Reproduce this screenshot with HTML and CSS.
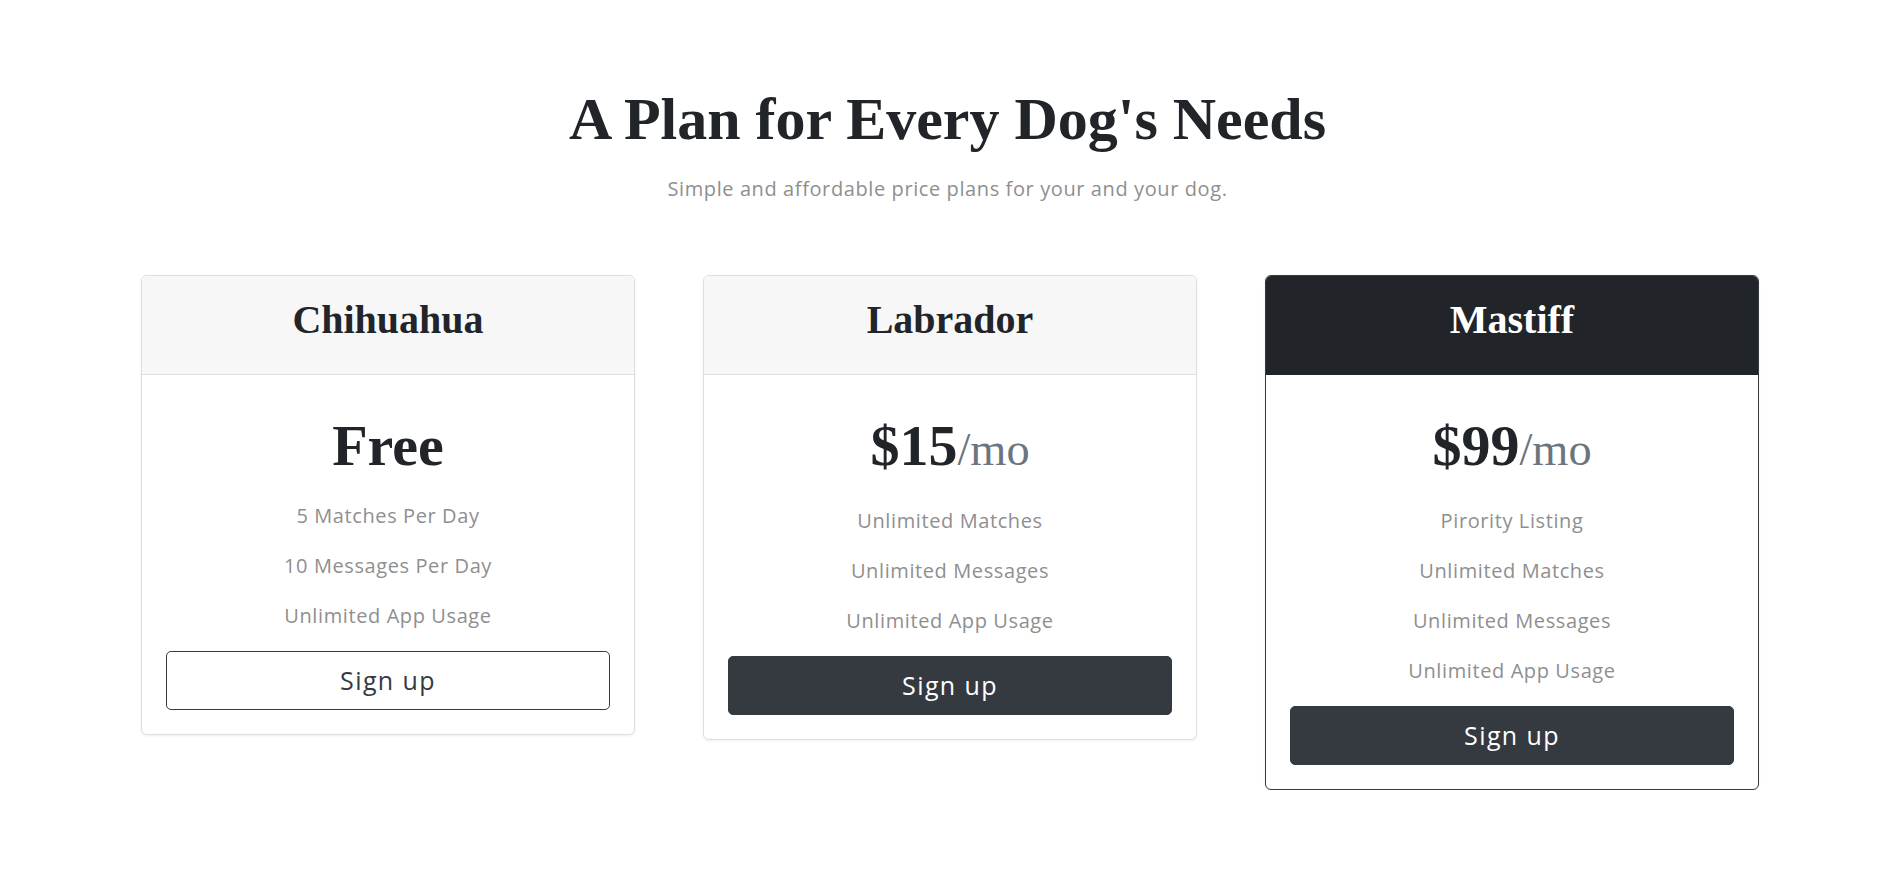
FILE: index.html
```html
<!DOCTYPE html>
<html lang="en">
<head>
<meta charset="utf-8">
<title>Pricing</title>
<link rel="stylesheet" href="styles.css">
</head>
<body>
<section class="pricing">
  <h1 class="section-title">A Plan for Every Dog's Needs</h1>
  <p class="section-sub">Simple and affordable price plans for your and your dog.</p>
  <div class="plans">
    <div class="card">
      <div class="card-header"><h3 class="plan-name">Chihuahua</h3></div>
      <div class="card-body">
        <h2 class="price">Free</h2>
        <ul class="features">
          <li>5 Matches Per Day</li>
          <li>10 Messages Per Day</li>
          <li>Unlimited App Usage</li>
        </ul>
        <button class="btn btn-outline">Sign up</button>
      </div>
    </div>
    <div class="card">
      <div class="card-header"><h3 class="plan-name">Labrador</h3></div>
      <div class="card-body">
        <h2 class="price">$15<small class="per">/mo</small></h2>
        <ul class="features">
          <li>Unlimited Matches</li>
          <li>Unlimited Messages</li>
          <li>Unlimited App Usage</li>
        </ul>
        <button class="btn btn-dark">Sign up</button>
      </div>
    </div>
    <div class="card card-featured">
      <div class="card-header"><h3 class="plan-name">Mastiff</h3></div>
      <div class="card-body">
        <h2 class="price">$99<small class="per">/mo</small></h2>
        <ul class="features">
          <li>Pirority Listing</li>
          <li>Unlimited Matches</li>
          <li>Unlimited Messages</li>
          <li>Unlimited App Usage</li>
        </ul>
        <button class="btn btn-dark">Sign up</button>
      </div>
    </div>
  </div>
</section>
</body>
</html>
```

FILE: styles.css
```css
* { box-sizing: border-box; }

html, body {
  margin: 0;
  padding: 0;
  background: #ffffff;
}

body {
  font-family: "Open Sans", "Liberation Sans", sans-serif;
  color: #212529;
}

.pricing {
  padding-top: 84px;
  text-align: center;
}

.section-title {
  margin: 0;
  font-family: "Liberation Serif", "Times New Roman", serif;
  font-weight: 700;
  font-size: 60px;
  line-height: 70px;
  color: #212529;
}

.section-sub {
  margin: 20px 0 0;
  font-size: 20px;
  line-height: 30px;
  letter-spacing: 0.6px;
  color: #8f8f8f;
}

.plans {
  display: flex;
  gap: 68px;
  padding-left: 141px;
  margin-top: 71px;
  align-items: flex-start;
}

.card {
  width: 494px;
  border: 1px solid #dfdfdf;
  border-radius: 6px;
  background: #fff;
  box-shadow: 0 1px 3px rgba(0, 0, 0, 0.07);
  overflow: hidden;
}

.card-header {
  background: #f7f7f7;
  border-bottom: 1px solid #dfdfdf;
  padding: 20px 20px 30px;
}

.plan-name {
  margin: 0;
  font-family: "Liberation Serif", "Times New Roman", serif;
  font-weight: 700;
  font-size: 40px;
  line-height: 48px;
}

.card-body {
  padding: 25px 24px 24px;
}

.price {
  margin: 11px 0 10px;
  font-family: "Liberation Serif", "Times New Roman", serif;
  font-weight: 700;
  font-size: 58px;
  line-height: 1.2;
  color: #212529;
}

.per {
  font-size: 80%;
  font-weight: 400;
  line-height: 1.55;
  color: #6c757d;
}

.features {
  list-style: none;
  margin: 0 0 10px;
  padding: 0;
}

.features li {
  font-size: 20px;
  line-height: 50px;
  color: #8f8f8f;
  letter-spacing: 0.6px;
}

.btn {
  display: block;
  width: 100%;
  height: 59px;
  border-radius: 5px;
  font-family: "Open Sans", "Liberation Sans", sans-serif;
  font-size: 25px;
  letter-spacing: 1.4px;
  cursor: pointer;
}

.btn-outline {
  background: #fff;
  border: 1px solid #343a40;
  color: #343a40;
}

.btn-dark {
  background: #343a40;
  border: 1px solid #343a40;
  color: #fff;
}

.card-featured {
  border-color: #343a40;
}

.card-featured .card-header {
  background: #212529;
  border-bottom-color: #212529;
  color: #fff;
}
```
